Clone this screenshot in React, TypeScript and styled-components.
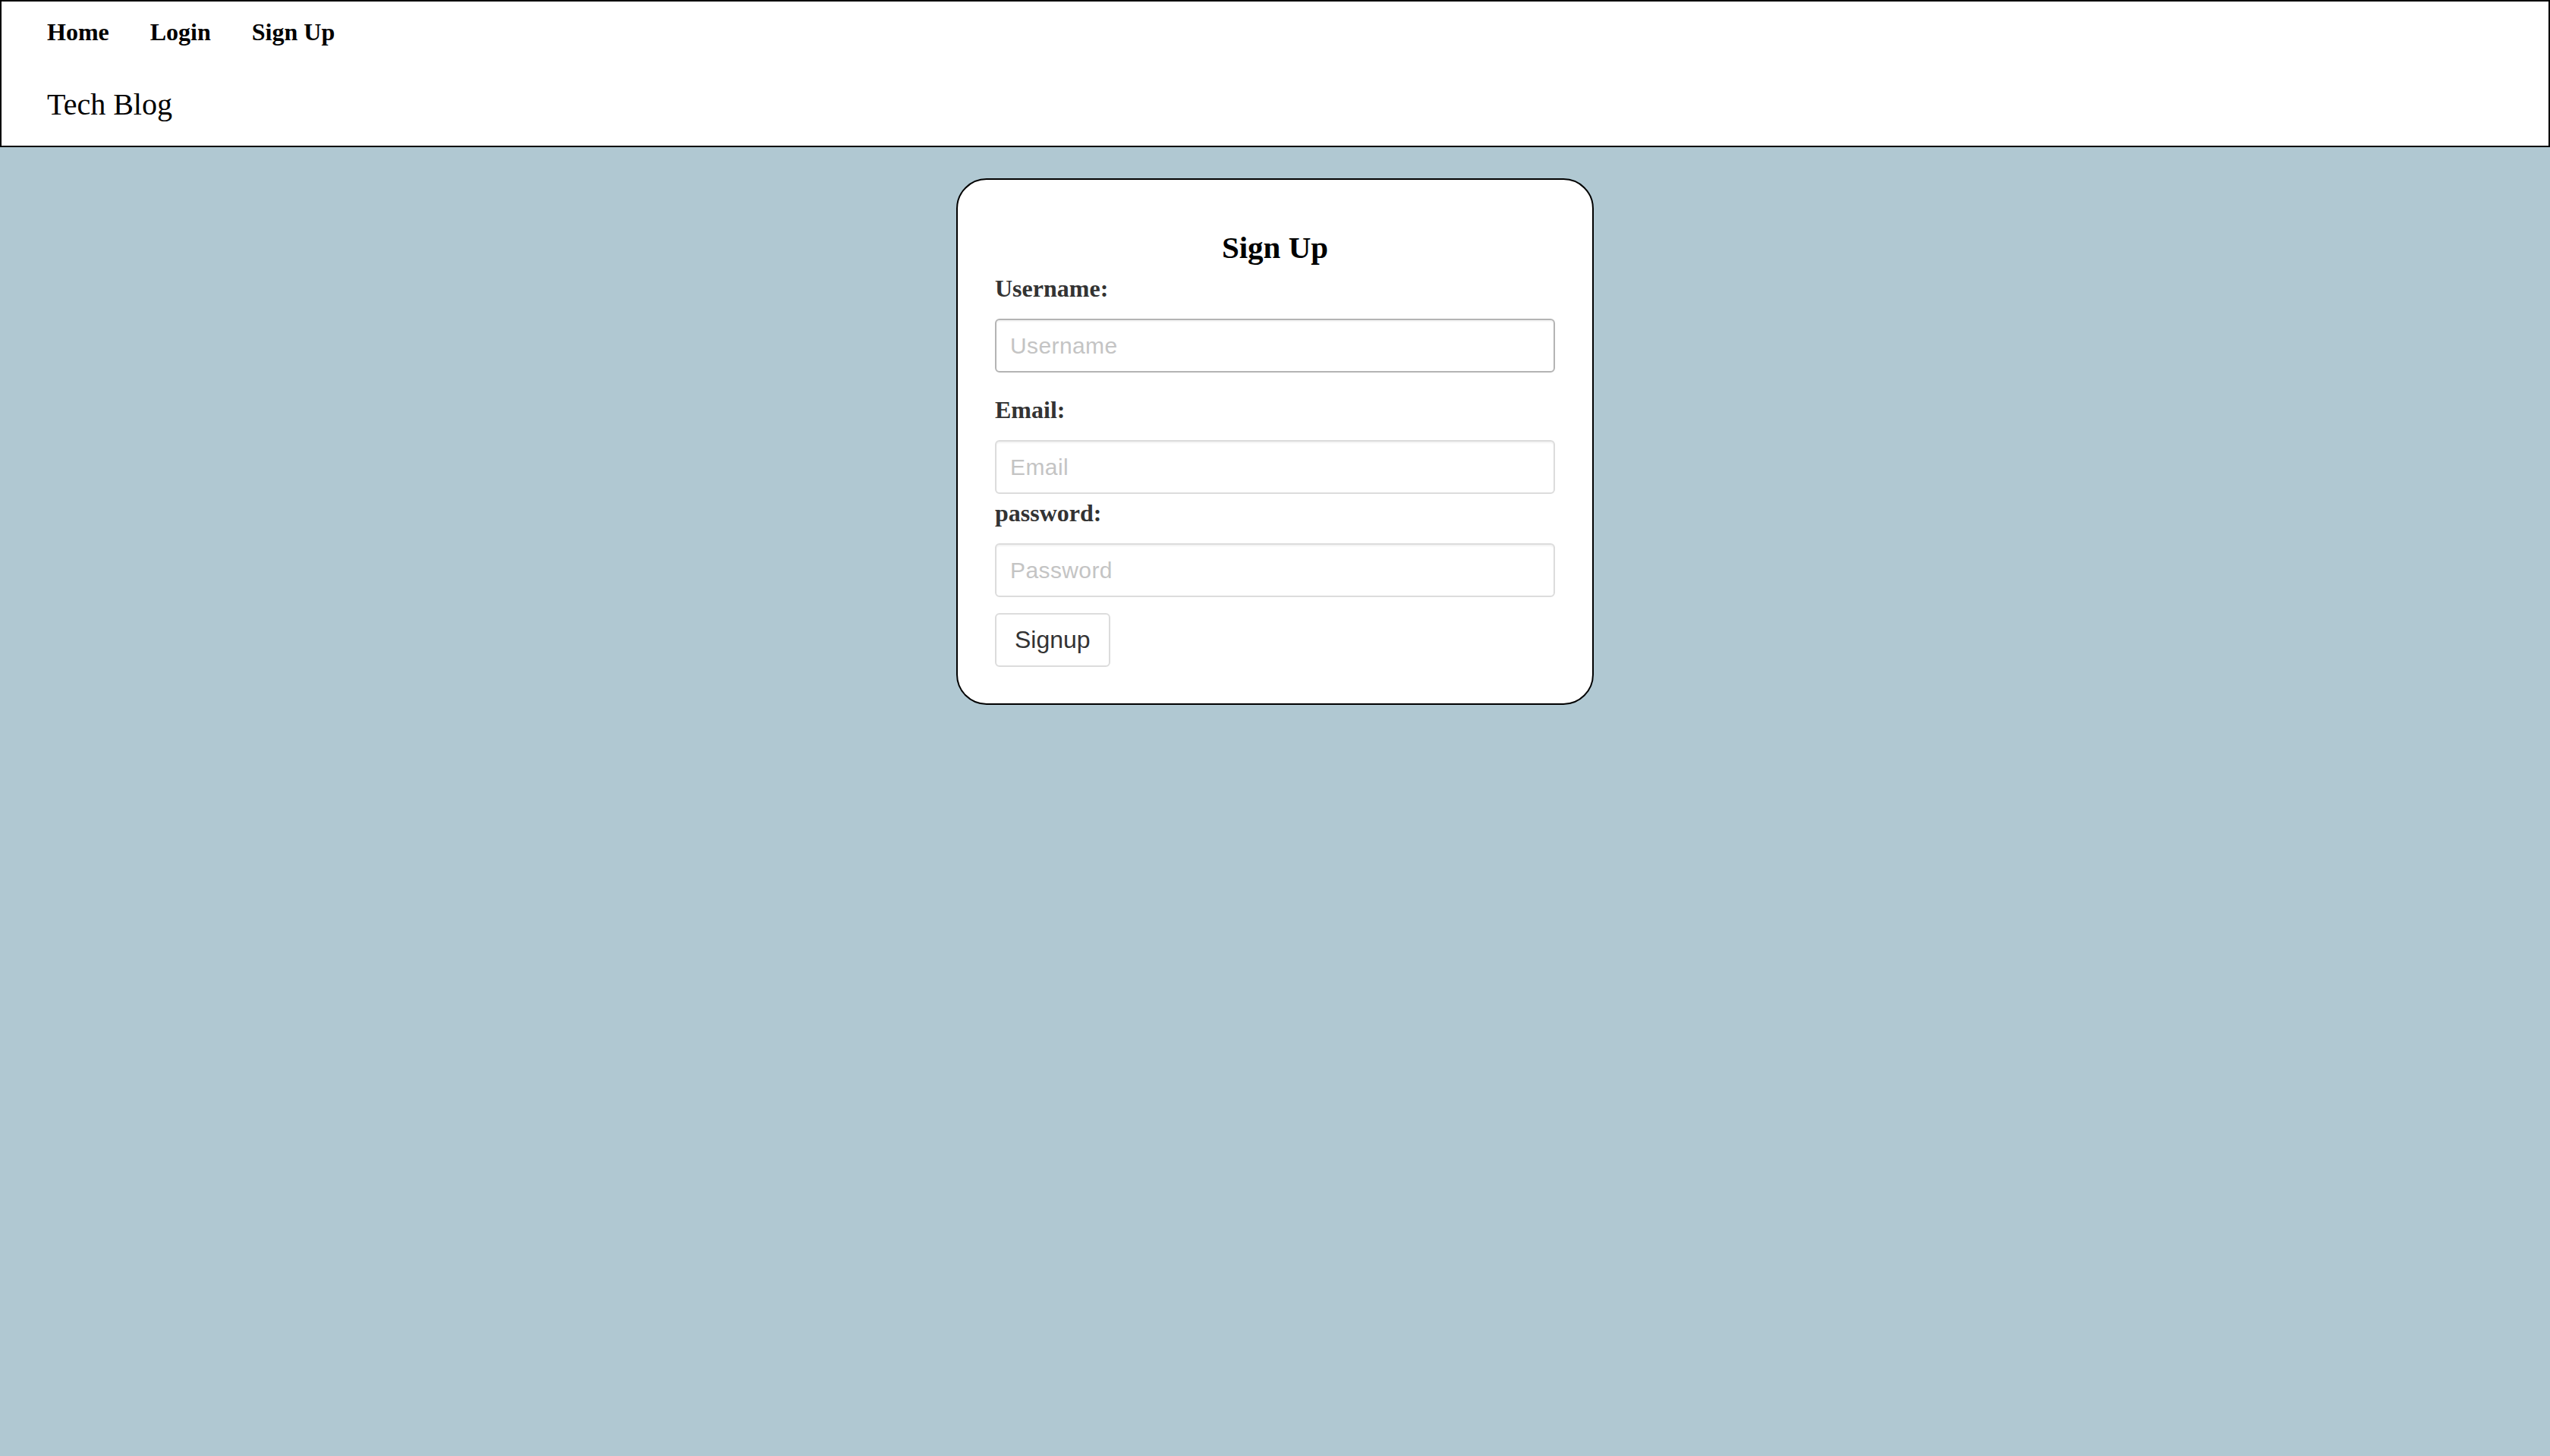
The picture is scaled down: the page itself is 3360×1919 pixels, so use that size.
import React from "react";
import styled, { createGlobalStyle } from "styled-components";

const GlobalStyle = createGlobalStyle`
  html, body {
    margin: 0;
    padding: 0;
    background: #b0c8d2;
    min-height: 100%;
  }
  body {
    font-family: "Liberation Serif", "Times New Roman", serif;
  }
  * { box-sizing: border-box; }
`;

const Page = styled.div`
  min-height: 1919px;
  background: #b0c8d2;
`;

const Header = styled.header`
  background: #ffffff;
  border: 2px solid #000000;
  padding: 20px 60px 30px;
  display: flex;
  flex-direction: column;
`;

const Nav = styled.nav`
  display: flex;
  gap: 54px;
`;

const NavLink = styled.a`
  font-family: "Liberation Serif", "Times New Roman", serif;
  font-weight: 700;
  font-size: 32px;
  line-height: 40px;
  color: #000;
  text-decoration: none;
`;

const Brand = styled.div`
  margin-top: 52px;
  font-family: "Liberation Serif", "Times New Roman", serif;
  font-weight: 400;
  font-size: 40px;
  line-height: 48px;
  color: #000;
`;

const Main = styled.main`
  display: flex;
  justify-content: center;
  padding-top: 41px;
`;

const Card = styled.section`
  width: 840px;
  background: #ffffff;
  border: 2px solid #000000;
  border-radius: 40px;
  padding: 65px 49px 48px;
  display: flex;
  flex-direction: column;
`;

const Title = styled.h2`
  margin: 0;
  text-align: center;
  font-family: "Liberation Serif", "Times New Roman", serif;
  font-weight: 700;
  font-size: 41px;
  line-height: 48px;
  color: #000;
`;

const Form = styled.form`
  display: flex;
  flex-direction: column;
  align-items: stretch;
`;

const Label = styled.label<{ $gap: number }>`
  margin-top: ${(p) => p.$gap}px;
  font-family: "Liberation Serif", "Times New Roman", serif;
  font-weight: 700;
  font-size: 32px;
  line-height: 40px;
  color: #333333;
`;

const Input = styled.input<{ $active?: boolean }>`
  margin-top: 20px;
  height: 71px;
  width: 100%;
  padding: 0 18px;
  border: 2px solid ${(p) => (p.$active ? "#b4b4b4" : "#dcdcdc")};
  border-radius: 6px;
  background: #fff;
  box-shadow: inset 0 2px 2px rgba(0, 0, 0, 0.05);
  font-family: "Liberation Sans", Arial, sans-serif;
  font-size: 30px;
  letter-spacing: 0.4px;
  color: #333;
  outline: none;
  &::placeholder {
    color: #c4c4c4;
  }
`;

const Button = styled.button`
  align-self: flex-start;
  margin-top: 21px;
  height: 71px;
  padding: 0 24px;
  background: #fff;
  border: 2px solid #dcdcdc;
  border-radius: 6px;
  font-family: "Liberation Sans", Arial, sans-serif;
  font-size: 32px;
  color: #333;
  cursor: pointer;
`;

export default function App() {
  return (
    <Page>
      <GlobalStyle />
      <Header>
        <Nav>
          <NavLink href="#">Home</NavLink>
          <NavLink href="#">Login</NavLink>
          <NavLink href="#">Sign Up</NavLink>
        </Nav>
        <Brand>Tech Blog</Brand>
      </Header>
      <Main>
        <Card>
          <Title>Sign Up</Title>
          <Form onSubmit={(e) => e.preventDefault()}>
            <Label $gap={10} htmlFor="username">Username:</Label>
            <Input id="username" $active placeholder="Username" />
            <Label $gap={29} htmlFor="email">Email:</Label>
            <Input id="email" type="email" placeholder="Email" />
            <Label $gap={5} htmlFor="password">password:</Label>
            <Input id="password" type="password" placeholder="Password" />
            <Button type="submit">Signup</Button>
          </Form>
        </Card>
      </Main>
    </Page>
  );
}
